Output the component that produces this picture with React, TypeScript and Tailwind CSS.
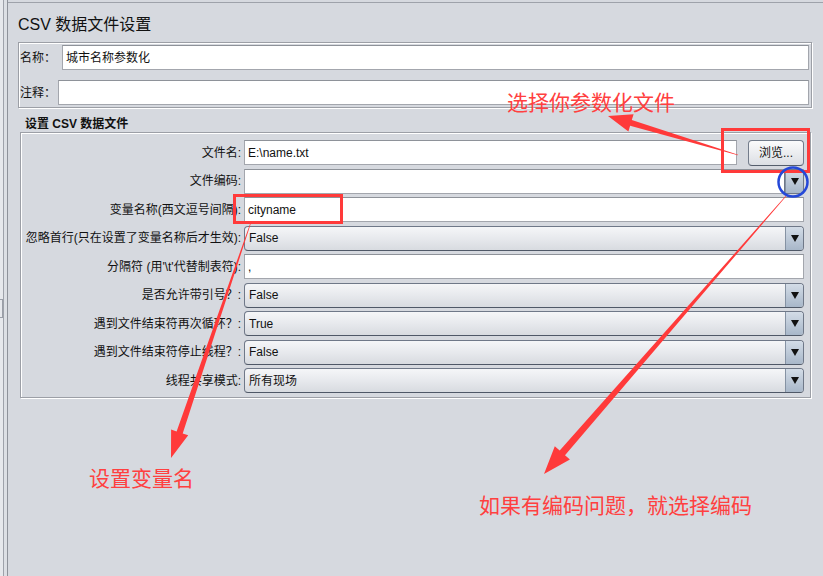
import React from "react";

function arrowPts(x1: number, y1: number, x2: number, y2: number, w0: number, w1: number, hl: number, hw: number) {
  const dx = x2 - x1, dy = y2 - y1;
  const L = Math.hypot(dx, dy);
  const ux = dx / L, uy = dy / L;
  const nx = -uy, ny = ux;
  const bx = x2 - ux * hl, by = y2 - uy * hl;
  const p = [
    [x1 + (nx * w0) / 2, y1 + (ny * w0) / 2],
    [bx + (nx * w1) / 2, by + (ny * w1) / 2],
    [bx + (nx * hw) / 2, by + (ny * hw) / 2],
    [x2, y2],
    [bx - (nx * hw) / 2, by - (ny * hw) / 2],
    [bx - (nx * w1) / 2, by - (ny * w1) / 2],
    [x1 - (nx * w0) / 2, y1 - (ny * w0) / 2],
  ];
  return p.map((q) => q.map((v) => v.toFixed(1)).join(",")).join(" ");
}

function Tri() {
  return (
    <svg width="8" height="7" viewBox="0 0 8 7">
      <path d="M0 0H8L4 7Z" fill="#111" />
    </svg>
  );
}

function ArrowBtn() {
  return (
    <div className="w-[18px] shrink-0 border-l border-[#8592a3] bg-gradient-to-b from-[#d3dce7] to-[#a8b7c9] flex items-center justify-center">
      <Tri />
    </div>
  );
}

function Combo({ value }: { value: string }) {
  return (
    <div className="flex-1 h-full flex rounded-[4px] border border-[#6f7888] border-b-[#4f5867] bg-gradient-to-b from-[#f5f6f8] via-[#e7e9ed] to-[#d8dbe0] overflow-hidden">
      <div className="flex-1 flex items-center pl-[4px] text-[12px] text-[#111]">{value}</div>
      <ArrowBtn />
    </div>
  );
}

function Input({ value, className = "" }: { value?: string; className?: string }) {
  return (
    <div className={"h-full flex items-center bg-white border border-[#a3a6ad] border-t-[#8e9299] pl-[3px] text-[12px] text-[#111] " + className}>
      {value}
    </div>
  );
}

type Row = { label: string; type: "file" | "editcombo" | "input" | "combo"; value?: string };

const rows: Row[] = [
  { label: "文件名:", type: "file", value: "E:\\name.txt" },
  { label: "文件编码:", type: "editcombo" },
  { label: "变量名称(西文逗号间隔):", type: "input", value: "cityname" },
  { label: "忽略首行(只在设置了变量名称后才生效):", type: "combo", value: "False" },
  { label: "分隔符 (用'\\t'代替制表符):", type: "input", value: "," },
  { label: "是否允许带引号？:", type: "combo", value: "False" },
  { label: "遇到文件结束符再次循环？:", type: "combo", value: "True" },
  { label: "遇到文件结束符停止线程？:", type: "combo", value: "False" },
  { label: "线程共享模式:", type: "combo", value: "所有现场" },
];

function Field({ r }: { r: Row }) {
  if (r.type === "file") {
    return (
      <div className="flex-1 h-full flex items-center">
        <Input value={r.value} className="flex-1" />
        <div className="ml-[11px] w-[56px] h-[26px] flex items-center justify-center rounded-[4px] border border-[#737c8b] border-b-[#555e6c] bg-gradient-to-b from-[#fbfbfc] to-[#dcdfe4] text-[12px] text-[#111]">
          浏览...
        </div>
      </div>
    );
  }
  if (r.type === "editcombo") {
    return (
      <div className="flex-1 h-full flex bg-white border border-[#a3a6ad] border-t-[#8e9299]">
        <div className="flex-1" />
        <div className="flex rounded-r-[4px] overflow-hidden border border-[#6f7888] -my-px -mr-px">
          <ArrowBtn />
        </div>
      </div>
    );
  }
  if (r.type === "input") return <Input value={r.value} className="flex-1" />;
  return <Combo value={r.value || ""} />;
}

export default function App() {
  const red = "#ff3a3a";
  return (
    <div className="relative w-[823px] h-[576px] overflow-hidden bg-[#d6d9df] flex font-['Liberation_Sans','Noto_Sans_CJK_SC',sans-serif] text-[#111]">
      {/* left strip */}
      <div className="flex h-full shrink-0">
        <div className="w-[3px] h-full bg-[#e6e8ec] flex flex-col">
          <div className="mt-[299px] h-[19px] w-[3px] border-y border-r border-[#9a9ea7]" />
        </div>
        <div className="w-px h-full bg-[#9ea2aa]" />
        <div className="w-[3px] h-full bg-[#dcdfe4]" />
        <div className="w-px h-full bg-[#8e929a]" />
      </div>

      {/* main */}
      <div className="flex-1 mt-[2px] border-t border-[#9ea2aa] pl-[10px] flex flex-col">
        <div className="pt-[12px] text-[16px] leading-[20px] text-[#111]">CSV 数据文件设置</div>

        <div className="mt-[7px] w-[794px] border border-[#9c9fa6] shadow-[inset_1px_1px_0_#fff,1px_1px_0_#fff] pt-[2px] pb-[2px] pr-[2px] pl-[1px] flex flex-col gap-[10px]">
          <div className="flex h-[25px] items-center">
            <div className="w-[42px] text-[12px]">名称：</div>
            <Input value="城市名称参数化" className="flex-1" />
          </div>
          <div className="flex h-[25px] items-center">
            <div className="w-[38px] text-[12px]">注释：</div>
            <Input className="flex-1" />
          </div>
        </div>

        <div className="mt-[8px] ml-[7px] text-[12px] leading-[16px] font-bold">设置 CSV 数据文件</div>

        <div className="ml-[2px] w-[791px] border border-[#9c9fa6] shadow-[inset_1px_1px_0_#fff,1px_1px_0_#fff] pt-[7px] pb-[4px] pr-[6px] flex flex-col gap-[3.5px]">
          {rows.map((r, i) => (
            <div key={i} className="flex h-[25px] items-center">
              <div className="w-[220px] shrink-0 text-right text-[12px] whitespace-nowrap">{r.label}</div>
              <div className="w-[3px] shrink-0" />
              <Field r={r} />
            </div>
          ))}
        </div>
      </div>

      {/* annotations overlay */}
      <svg className="absolute inset-0 pointer-events-none" width="823" height="576">
        <rect x="722.5" y="129.5" width="86" height="42" fill="none" stroke={red} strokeWidth="3" />
        <rect x="234.5" y="195.5" width="107" height="27" fill="none" stroke={red} strokeWidth="3" />
        <circle cx="793" cy="182" r="14.5" fill="none" stroke="#2448d8" strokeWidth="2.5" />
        <polygon points={arrowPts(738, 155, 608, 116, 0.6, 6, 24, 18)} fill={red} />
        <polygon points={arrowPts(251, 222, 171, 458, 0.6, 6.5, 27, 18)} fill={red} />
        <polygon points={arrowPts(786, 196, 544, 474, 0.6, 7, 28, 20)} fill={red} />
      </svg>
      <div className="absolute left-[507px] top-[90px] text-[21px] leading-[22px] text-[#ff4040] whitespace-nowrap font-['Noto_Sans_CJK_SC',sans-serif]">
        选择你参数化文件
      </div>
      <div className="absolute left-[89px] top-[466px] text-[21px] leading-[22px] text-[#ff4040] whitespace-nowrap font-['Noto_Sans_CJK_SC',sans-serif]">
        设置变量名
      </div>
      <div className="absolute left-[479px] top-[493px] text-[21px] leading-[22px] text-[#ff4040] whitespace-nowrap font-['Noto_Sans_CJK_SC',sans-serif]">
        如果有编码问题，就选择编码
      </div>
    </div>
  );
}
